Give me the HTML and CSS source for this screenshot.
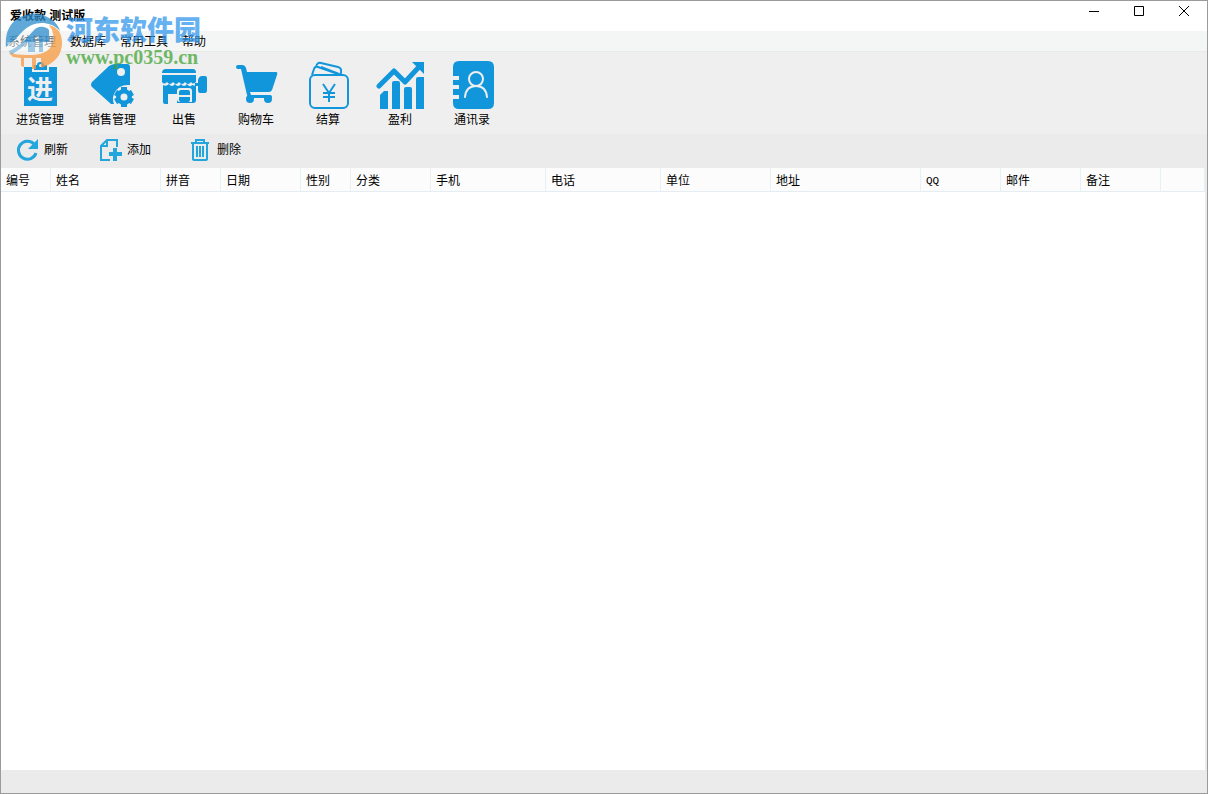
FILE: index.html
```html
<!DOCTYPE html>
<html lang="zh-CN">
<head>
<meta charset="utf-8">
<title>爱收款 测试版</title>
<link rel="stylesheet" href="styles.css">
</head>
<body>
<div class="window">
  <header class="titlebar">
    <h1 class="title">爱收款 测试版</h1>
    <div class="controls">
      <button class="control" aria-label="最小化"><svg width="12" height="12" viewBox="0 0 12 12"><path d="M1 6.500h10"/></svg></button>
      <button class="control" aria-label="最大化"><svg width="12" height="12" viewBox="0 0 12 12"><path d="M1.500 1.500h9v9h-9z"/></svg></button>
      <button class="control" aria-label="关闭"><svg width="12" height="12" viewBox="0 0 12 12"><path d="M1 1l10 10M11 1L1 11"/></svg></button>
    </div>
  </header>
  <nav class="menubar">
    <button class="menu menu-dim">系统管理</button>
    <button class="menu">数据库</button>
    <button class="menu">常用工具</button>
    <button class="menu">帮助</button>
  </nav>
  <div class="toolbar">
    <button class="tool">
      <svg class="tool-icon" viewBox="0 0 48 48"><path d="M8 6h8v5h17V6h8v39H8z"/><path d="M18 4h3q0-3 3.500-3T28 4h3v5H18z"/><circle class="cut" cx="24.500" cy="4.500" r="1.500"/><text class="badge" x="24" y="38">进</text></svg>
      <span>进货管理</span>
    </button>
    <button class="tool">
      <svg class="tool-icon" viewBox="0 0 48 48"><path d="M4 21L21 5q3-2 7-2h11q3 0 3 3v18q-12-1-16 9-2 5 0 10h-3L4 26q-2-2 0-5z"/><circle class="cut" cx="33" cy="11" r="4"/><circle cx="36" cy="36" r="8"/><path d="M33 26h6v20h-6zM26 34l3-5 17 9-3 5zM26 38l3 5 17-9-3-5z"/><circle class="cut" cx="36" cy="36" r="3.500"/></svg>
      <span>销售管理</span>
    </button>
    <button class="tool">
      <svg class="tool-icon" viewBox="0 0 48 48"><path d="M6 8h27q3 0 3 4H2q0-4 4-4z"/><path d="M2 14h34v7q-3 3-5 0-3 4-6 0-3 4-6 0-3 4-6 0-3 4-6 0-3 3-5 0z"/><path d="M3 24q3 2 6-1 3 4 6 0 3 4 6 0 3 4 6 0 3 4 5 1l4 1v14q0 3-3 3H17v-9H8v10H5q-2 0-2-2z"/><path class="cut" d="M17 30q0-3 3-3h9q3 0 3 3v11H20q-3 0-3-3z"/><path d="M19 31q0-2 2-2h7q2 0 2 2v3H19zM19 36h11v3q0 2-2 2h-7q-2 0-2-2z"/><path d="M35 22h4v3h-4zM42 15h3q2 0 2 2v12q0 3-2 3h-5q-2 0-2-3V19q1-4 4-4z"/></svg>
      <span>出售</span>
    </button>
    <button class="tool">
      <svg class="tool-icon" viewBox="0 0 48 48"><path d="M6 4h4q3 0 4 3l1 4h29q2 0 1 3l-5 15q-1 2-3 2H18l1 3h19q2 0 2 2t-2 1H19q-3 0-4-3L9 8H6q-2 0-2-2t2-2z"/><circle cx="18" cy="38" r="4"/><circle cx="36" cy="38" r="4"/></svg>
      <span>购物车</span>
    </button>
    <button class="tool">
      <svg class="tool-icon" viewBox="0 0 48 48"><g class="line"><rect x="6" y="14" width="38" height="33" rx="5"/><path d="M8 14l2-6q1-3 4-2l23 8M12 6q1-5 5-4l17 4q4 1 3 6l-1 2M17 6l18 7"/><path d="M19 23l6 9 6-9M19 32h12M19 36h12M25 32v9"/></g></svg>
      <span>结算</span>
    </button>
    <button class="tool">
      <svg class="tool-icon" viewBox="0 0 48 48"><path d="M4 48V34l4-4h4v18zM16 22q0-2 2-2h4q2 0 2 2v26h-8zM28 28q0-2 2-2h4q2 0 2 2v20h-8zM40 18q0-2 2-2h6v32h-8z"/><path class="trend" d="M3 25L18 10l11 11L42 7"/><path d="M36 1h12v12z"/></svg>
      <span>盈利</span>
    </button>
    <button class="tool">
      <svg class="tool-icon" viewBox="0 0 48 48"><path d="M5 6q0-6 6-6h29q6 0 6 6v36q0 6-6 6H11q-6 0-6-6v-4h6v-4H5v-6h6v-4H5v-5h6v-4H5v-5z"/><g class="person"><circle cx="28" cy="18" r="7"/><path d="M17 36q1-11 11-11t11 11"/></g></svg>
      <span>通讯录</span>
    </button>
  </div>
  <div class="actions">
    <button class="action">
      <svg class="action-icon" viewBox="0 0 24 24"><path class="stroke3" d="M19 6A9 9 0 1 0 21 15"/><path class="fill" d="M23 1v10H13z"/></svg>
      <span>刷新</span>
    </button>
    <button class="action">
      <svg class="action-icon" viewBox="0 0 24 24"><path class="stroke2" d="M12 22H3V8l6-6h10v7M9 2v6H3"/><path class="stroke4" d="M17 10v13M11 16h13"/></svg>
      <span>添加</span>
    </button>
    <button class="action">
      <svg class="action-icon" viewBox="0 0 24 24"><path class="stroke2" d="M3 5h18M8 5V2h8v3M5 5v16q0 1 2 1h10q2 0 2-1V5M9 8v11M12 8v11M15 8v11"/></svg>
      <span>删除</span>
    </button>
  </div>
  <main class="content">
    <table class="grid">
      <colgroup><col class="w50"><col class="w110"><col class="w60"><col class="w80"><col class="w50"><col class="w80"><col class="w115"><col class="w115"><col class="w110"><col class="w150"><col class="w80"><col class="w80"><col class="w80"><col></colgroup>
      <thead><tr><th>编号</th><th>姓名</th><th>拼音</th><th>日期</th><th>性别</th><th>分类</th><th>手机</th><th>电话</th><th>单位</th><th>地址</th><th class="narrow">QQ</th><th>邮件</th><th>备注</th><td></td></tr></thead>
    </table>
  </main>
  <footer class="statusbar"></footer>
  <div class="watermark">
    <svg class="watermark-logo" width="58" height="58" viewBox="0 0 58 58">
      <path class="logo-blue" d="M1 35Q-1 14 15 5q16-8 31 2 7 5 9 12-6-7-16-8-12-1-21 8Q10 28 1 35z"/>
      <path class="logo-blue" d="M4 39Q13 35 20 28l9-10q4-4 10-3 4 1 5 3v12h-6v10h-4V24h-4v16h-7V30Q15 38 6 43z"/>
      <path class="logo-white" d="M2 30h45v11H5z"/>
      <path class="logo-orange" d="M44 13q13 3 13 18 0 18-21 25V46h-5v11h-4V46h-8v9l-3-1v-8l-8-1-4-4q8 2 16 2 22 1 27-10 4-11-3-20z"/>
    </svg>
    <div class="watermark-text">
      <div class="watermark-name">河东软件园</div>
      <div class="watermark-url">www.pc0359.cn</div>
    </div>
  </div>
</div>
</body>
</html>
```
FILE: styles.css
```css
* { box-sizing: border-box; }
body {
  margin: 0;
  font: 12px/16px "Liberation Sans", "Noto Sans CJK SC", sans-serif;
  color: #000;
}
button {
  margin: 0;
  padding: 0;
  border: 0;
  background: none;
  font: inherit;
  color: inherit;
}
svg { display: block; }
.window {
  position: relative;
  display: flex;
  flex-direction: column;
  min-height: 100vh;
  border: 1px solid #9b9b9b;
  background: #ebebeb;
}
.titlebar {
  display: flex;
  justify-content: space-between;
  height: 30px;
  padding: 0 1px 0 9px;
  background: #fff;
}
.title { margin: 7px 0 0; font-size: 12px; line-height: 16px; }
.controls { display: flex; height: 20px; }
.control { width: 45px; display: grid; place-items: center; }
.control svg { fill: none; stroke: #000; }
.menubar {
  display: flex;
  height: 21px;
  background: #f4f6f5;
  border-bottom: 1px solid #e9e9e9;
}
.menu { padding: 2px 7px 0; }
.menu-dim { color: #70787f; }
.toolbar {
  display: flex;
  height: 82px;
  padding: 9px 3px 0;
  background: #efefef;
}
.tool {
  width: 72px;
  display: flex;
  flex-direction: column;
  align-items: center;
  gap: 3px;
}
.tool-icon { width: 48px; height: 48px; fill: #1296db; }
.badge { font-size: 26px; font-weight: 700; text-anchor: middle; fill: #efefef; }
.cut { fill: #efefef; }
.line { fill: none; stroke: #1296db; stroke-width: 2; }
.trend { fill: none; stroke: #1296db; stroke-width: 5; stroke-linecap: round; stroke-linejoin: round; }
.person { fill: none; stroke: #efefef; stroke-width: 2; stroke-linecap: round; }
.actions {
  display: flex;
  gap: 30px;
  height: 34px;
  padding: 0 14px 4px;
}
.action { display: flex; align-items: center; gap: 5px; padding-top: 1px; }
.action:last-child { margin-left: 7px; }
.action-icon { width: 24px; height: 24px; fill: none; stroke: #22a6dc; }
.fill { fill: #22a6dc; stroke: none; }
.stroke2 { stroke-width: 2; }
.stroke3 { stroke-width: 3; }
.stroke4 { stroke-width: 4; }
.content { flex: 1; margin-right: 2px; background: #fff; }
.grid { width: 100%; table-layout: fixed; border-collapse: separate; border-spacing: 0; }
.grid th, .grid td {
  height: 24px;
  padding: 2px 0 0 5px;
  border-right: 1px solid #e7f0f5;
  border-bottom: 1px solid #e3edf3;
  background: #fcfcfc;
  font-weight: 400;
  text-align: left;
}
.grid .narrow { font-family: "Liberation Mono", monospace; font-size: 11px; }
.w50 { width: 50px; }
.w60 { width: 60px; }
.w80 { width: 80px; }
.w110 { width: 110px; }
.w115 { width: 115px; }
.w150 { width: 150px; }
.statusbar { height: 23px; background: #ebebeb; }
.watermark {
  position: absolute;
  top: 11px;
  left: 4px;
  display: flex;
  gap: 3px;
  opacity: .75;
  pointer-events: none;
}
.logo-blue { fill: #2b8ccc; }
.logo-orange { fill: #f79a3e; }
.logo-white { fill: #fff; opacity: .4; }
.watermark-name {
  font: 900 27px/33px "Noto Sans CJK SC", sans-serif;
  color: #3397ea;
}
.watermark-url {
  font: 700 20px/24px "Liberation Serif", serif;
  color: #43a536;
}
```
